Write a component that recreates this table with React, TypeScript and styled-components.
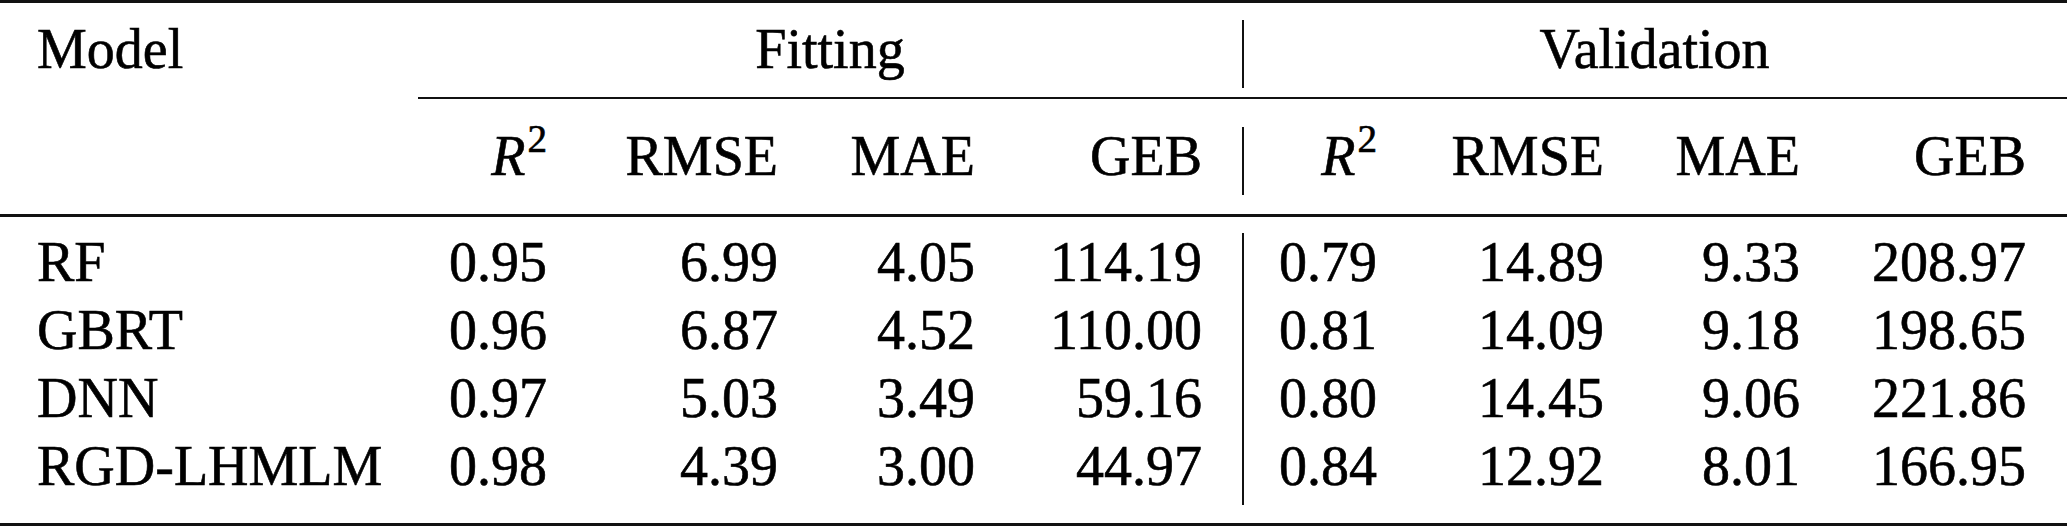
import React from "react";
import styled, { createGlobalStyle } from "styled-components";

const Global = createGlobalStyle`
  html, body { margin: 0; padding: 0; background: #ffffff; }
  #root { width: 2067px; }
`;

const COLS = "412px 135px 231px 197px 227px 60px 115px 227px 196px 226px 41px";

const Table = styled.div`
  width: 2067px;
  height: 527px;
  display: flex;
  flex-direction: column;
  font-family: "Liberation Serif", Tinos, "Times New Roman", Times, serif;
  font-size: 56px;
  color: #000;
  background: #fff;
  overflow: hidden;
  -webkit-text-stroke: 0.6px #000;
`;

const Rule = styled.div<{ $h: number; $top: number; $left?: number }>`
  height: ${(p) => p.$h}px;
  margin-top: ${(p) => p.$top}px;
  margin-left: ${(p) => p.$left ?? 0}px;
  background: #111;
  flex: none;
`;

const Row = styled.div<{ $top?: number }>`
  display: grid;
  grid-template-columns: ${COLS};
  height: 68px;
  margin-top: ${(p) => p.$top ?? 0}px;
  flex: none;
`;

const Cell = styled.div<{ $align?: "left" | "right" | "center"; $span?: string; $pl?: number; $pr?: number }>`
  grid-column: ${(p) => p.$span ?? "auto"};
  text-align: ${(p) => p.$align ?? "right"};
  padding-left: ${(p) => p.$pl ?? 0}px;
  padding-right: ${(p) => p.$pr ?? 0}px;
  line-height: 58px;
  height: 68px;
  box-sizing: border-box;
  padding-bottom: 10px;
  white-space: nowrap;
`;

const SepCell = styled.div`
  display: flex;
  padding-left: 40px;
  &::before {
    content: "";
    width: 2px;
    background: #111;
  }
`;

const Italic = styled.span`
  font-style: italic;
`;

const Sup = styled.span`
  font-size: 0.7em;
  line-height: 0;
  vertical-align: 23px;
  margin-left: 2px;
`;

const RSquared = () => (
  <>
    <Italic>R</Italic>
    <Sup>2</Sup>
  </>
);

type Data = { model: string; fit: string[]; val: string[] };

const rows: Data[] = [
  { model: "RF", fit: ["0.95", "6.99", "4.05", "114.19"], val: ["0.79", "14.89", "9.33", "208.97"] },
  { model: "GBRT", fit: ["0.96", "6.87", "4.52", "110.00"], val: ["0.81", "14.09", "9.18", "198.65"] },
  { model: "DNN", fit: ["0.97", "5.03", "3.49", "59.16"], val: ["0.80", "14.45", "9.06", "221.86"] },
  { model: "RGD-LHMLM", fit: ["0.98", "4.39", "3.00", "44.97"], val: ["0.84", "12.92", "8.01", "166.95"] },
];

const metricHeads = [<RSquared key="r" />, "RMSE", "MAE", "GEB"];

export default function App() {
  return (
    <>
      <Global />
      <Table>
        <Rule $h={3} $top={0} />
        <Row $top={17}>
          <Cell $align="left" $pl={37}>Model</Cell>
          <Cell $align="center" $span="2 / span 4" $pl={46}>Fitting</Cell>
          <SepCell />
          <Cell $align="center" $span="7 / span 5" $pr={20}>Validation</Cell>
        </Row>
        <Rule $h={2} $top={9} $left={418} />
        <Row $top={28}>
          <Cell />
          {metricHeads.map((h, i) => (
            <Cell key={`f${i}`}>{h}</Cell>
          ))}
          <SepCell />
          {metricHeads.map((h, i) => (
            <Cell key={`v${i}`}>{h}</Cell>
          ))}
          <Cell />
        </Row>
        <Rule $h={3} $top={19} />
        {rows.map((r, idx) => (
          <Row key={r.model} $top={idx === 0 ? 16 : 0}>
            <Cell $align="left" $pl={37}>{r.model}</Cell>
            {r.fit.map((v, i) => (
              <Cell key={`f${i}`}>{v}</Cell>
            ))}
            <SepCell />
            {r.val.map((v, i) => (
              <Cell key={`v${i}`}>{v}</Cell>
            ))}
            <Cell />
          </Row>
        ))}
        <Rule $h={3} $top={18} />
      </Table>
    </>
  );
}
